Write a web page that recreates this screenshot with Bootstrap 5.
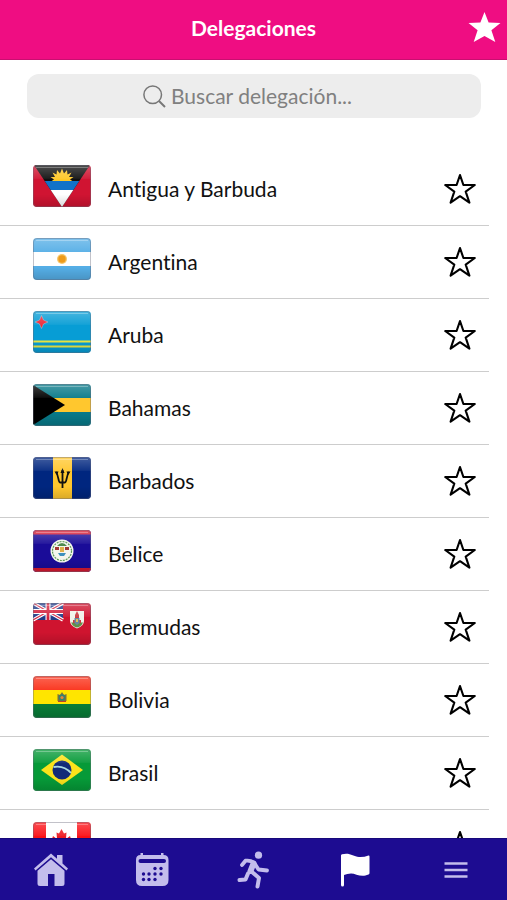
<!DOCTYPE html>
<html lang="es">
<head>
<meta charset="utf-8">
<meta name="viewport" content="width=device-width, initial-scale=1">
<title>Delegaciones</title>
<link rel="stylesheet" href="https://cdn.jsdelivr.net/npm/bootstrap@5.3.0/dist/css/bootstrap.min.css">
<style>
  body { font-family: Lato, "Noto Sans", sans-serif; font-variant-ligatures: none; color: #111; background: #fff; }
  .top-bar { height: 60px; background: #ef0d82; border-bottom: 1px solid #c80f70; padding: 0 6px 4px; }
  .side-slot { width: 33px; }
  .page-title { font-size: 21px; line-height: 28px; font-weight: 700; }
  .plain-btn { background: none; border: 0; padding: 0; line-height: 0; color: inherit; }
  .search-box { height: 44px; margin: 14px 26px 35px 27px; background: #ededed; border-radius: 12px; color: #777; gap: 5px; }
  .search-box input { width: 194px; padding: 0; border: 0; background: none; outline: 0; font-size: 21px; line-height: 28px; color: #444; }
  .search-box input::placeholder { color: #808080; opacity: 1; }
  .scroll-area { min-height: 0; overflow-y: auto; scrollbar-width: none; }
  .scroll-area::-webkit-scrollbar { display: none; }
  .delegations { margin-right: 18px; }
  .delegation { height: 73px; padding: 0 13px 0 33px; border-bottom: 1px solid #cdcdcd; }
  .flag { width: 58px; height: 42px; border-radius: 4px; margin-bottom: 6px; flex: none; }
  .delegation a { color: #111; font-size: 21px; line-height: 28px; gap: 17px; }
  .bottom-bar { height: 62px; background: #1d0c91; border-top: 1px solid #17087a; }
  .bottom-bar a { color: #c3bdec; }
  .bottom-bar a.current { color: #fff; }
</style>
<script src="https://cdn.jsdelivr.net/npm/bootstrap@5.3.0/dist/js/bootstrap.bundle.min.js"></script>
</head>
<body>
<svg width="0" height="0" class="position-absolute" aria-hidden="true">
  <defs>
    <linearGradient id="shine" x1="0" y1="0" x2="0" y2="1">
      <stop offset="0" stop-color="#fff" stop-opacity=".26"/><stop offset=".32" stop-color="#fff" stop-opacity=".06"/>
      <stop offset=".33" stop-color="#fff" stop-opacity="0"/><stop offset=".7" stop-color="#000" stop-opacity="0"/>
      <stop offset="1" stop-color="#000" stop-opacity=".15"/>
    </linearGradient>
    <symbol id="gloss" viewBox="0 0 58 42">
      <rect width="58" height="42" fill="url(#shine)"/>
      <rect x=".5" y=".5" width="57" height="41" rx="3.5" fill="none" stroke="#667" stroke-opacity=".4"/>
      <path d="M3 2.5H55" stroke="#fff" stroke-opacity=".3"/>
    </symbol>
    <symbol id="star-line" viewBox="0 0 32 32">
      <path d="M16 2 19.400 12H30.800L21.700 18.600 25.400 29.600 16 23.200 6.600 29.600 10.300 18.600 1.200 12H12.600Z" fill="none" stroke="#000" stroke-width="2.100" stroke-linejoin="round"/>
    </symbol>
  </defs>
</svg>

<div class="d-flex flex-column vh-100">
  <header class="top-bar d-flex align-items-center justify-content-between text-white flex-shrink-0">
    <span class="side-slot"></span>
    <h1 class="page-title m-0">Delegaciones</h1>
    <button class="plain-btn" type="button" aria-label="Favoritos">
      <svg width="33" height="33" viewBox="0 0 33 33"><path d="M16.5 1 20.6 11.5 32.5 12 23.4 19.3 27.3 31 16.5 25 5.7 31 9.6 19.3.5 12 12.4 11.5Z" fill="currentColor"/></svg>
    </button>
  </header>

  <form class="search-box d-flex align-items-center justify-content-center flex-shrink-0" role="search">
    <label for="q" class="d-flex"><svg width="23" height="23" viewBox="0 0 23 23" fill="none" stroke="#777" stroke-width="1.5" role="img" aria-label="Buscar"><circle cx="9.7" cy="9.7" r="8.8"/><path d="M16 16 22 22" stroke-width="2"/></svg></label>
    <input id="q" type="text" placeholder="Buscar delegación...">
  </form>

  <main class="scroll-area flex-fill">
    <ul class="delegations list-unstyled mb-0">
      <li class="delegation d-flex align-items-center justify-content-between">
        <a href="#antigua" class="d-flex align-items-center text-decoration-none"><svg class="flag" viewBox="0 0 58 42"><path fill="#d01432" d="M0 0H58V42H0Z"/><path fill="#111" d="M1 0H57L29 42Z"/><path fill="#ffc726" d="M17 17 21 14.5 17.5 12 22 12 19.500 7.500 23.500 9.500 24 5 27 8.500 29 3.500 31 8.500 34 5 34.500 9.500 38.500 7.500 36 12 40.500 12 37 14.500 41 17Z"/><path fill="#1272c8" d="M11.700 16H46.300L40.300 25H17.700Z"/><path fill="#fff" d="M17.700 25H40.300L29 42Z"/><use href="#gloss"/></svg>Antigua y Barbuda</a>
        <button class="plain-btn" type="button" aria-label="Marcar Antigua y Barbuda"><svg width="32" height="32"><use href="#star-line"/></svg></button>
      </li>
      <li class="delegation d-flex align-items-center justify-content-between">
        <a href="#argentina" class="d-flex align-items-center text-decoration-none"><svg class="flag" viewBox="0 0 58 42"><path fill="#55aee6" d="M0 0H58V42H0Z"/><path fill="#fff" d="M0 14H58V28H0Z"/><circle cx="29" cy="21" r="5" fill="#f6c66b"/><circle cx="29" cy="21" r="3.700" fill="#ee9b1b"/><use href="#gloss"/></svg>Argentina</a>
        <button class="plain-btn" type="button" aria-label="Marcar Argentina"><svg width="32" height="32"><use href="#star-line"/></svg></button>
      </li>
      <li class="delegation d-flex align-items-center justify-content-between">
        <a href="#aruba" class="d-flex align-items-center text-decoration-none"><svg class="flag" viewBox="0 0 58 42"><path fill="#079dd5" d="M0 0H58V42H0Z"/><path stroke="#e8e545" stroke-width="2" d="M0 30.500H58M0 35.500H58"/><path fill="#ed2736" stroke="#c5dce8" stroke-width=".4" d="M8.500 4.500 10.500 9 15 11 10.500 13 8.500 17.500 6.500 13 2 11 6.500 9Z"/><use href="#gloss"/></svg>Aruba</a>
        <button class="plain-btn" type="button" aria-label="Marcar Aruba"><svg width="32" height="32"><use href="#star-line"/></svg></button>
      </li>
      <li class="delegation d-flex align-items-center justify-content-between">
        <a href="#bahamas" class="d-flex align-items-center text-decoration-none"><svg class="flag" viewBox="0 0 58 42"><path fill="#087988" d="M0 0H58V42H0Z"/><path fill="#ffc72e" d="M0 14H58V28H0Z"/><path fill="#000" d="M0 1 32 21 0 41Z"/><use href="#gloss"/></svg>Bahamas</a>
        <button class="plain-btn" type="button" aria-label="Marcar Bahamas"><svg width="32" height="32"><use href="#star-line"/></svg></button>
      </li>
      <li class="delegation d-flex align-items-center justify-content-between">
        <a href="#barbados" class="d-flex align-items-center text-decoration-none"><svg class="flag" viewBox="0 0 58 42"><path fill="#00267f" d="M0 0H58V42H0Z"/><path fill="#ffc72e" d="M20 0H39V42H20Z"/><path fill="none" stroke="#111" stroke-width="1.800" d="M29.500 31V13M23 15C26 19 25 25 27 25.500H32C34 25 33 19 36 15"/><path fill="#111" d="M29.500 11 31.500 16H27.500ZM21.500 14.500 25.500 14.500 24 18ZM37.500 14.500 33.500 14.500 35 18Z"/><use href="#gloss"/></svg>Barbados</a>
        <button class="plain-btn" type="button" aria-label="Marcar Barbados"><svg width="32" height="32"><use href="#star-line"/></svg></button>
      </li>
      <li class="delegation d-flex align-items-center justify-content-between">
        <a href="#belice" class="d-flex align-items-center text-decoration-none"><svg class="flag" viewBox="0 0 58 42"><path fill="#1a0c98" d="M0 0H58V42H0Z"/><path fill="#d71931" d="M0 0H58V4.500H0ZM0 38H58V42H0Z"/><circle cx="29" cy="21" r="11.500" fill="#f4f6ee"/><circle cx="29" cy="21" r="9.500" fill="none" stroke="#5d9a58" stroke-width="1.200" stroke-dasharray="2 1"/><path fill="#4d8b4d" d="M24 16Q29 10 34 16Z"/><path fill="#a33a35" d="M22 17H26V20H22ZM32 17H36V20H32Z"/><path fill="#e0b34d" d="M27 17H31V22H27Z"/><path fill="#3d91bd" d="M25 23H33L31 26H27Z"/><use href="#gloss"/></svg>Belice</a>
        <button class="plain-btn" type="button" aria-label="Marcar Belice"><svg width="32" height="32"><use href="#star-line"/></svg></button>
      </li>
      <li class="delegation d-flex align-items-center justify-content-between">
        <a href="#bermudas" class="d-flex align-items-center text-decoration-none"><svg class="flag" viewBox="0 0 58 42"><path fill="#cf142f" d="M0 0H58V42H0Z"/><path fill="#203a87" d="M0 0H30V17H0Z"/><path stroke="#fff" stroke-width="3.400" d="M0 0 30 17M30 0 0 17"/><path stroke="#d32b48" stroke-width="1.200" d="M0 0 30 17M30 0 0 17"/><path stroke="#fff" stroke-width="5" d="M15 0V17M0 8.500H30"/><path stroke="#d3203b" stroke-width="2.800" d="M15 0V17M0 8.500H30"/><path fill="#f1f3ea" d="M37 8H51V18Q51 23 44 25.500Q37 23 37 18Z"/><path fill="#62904a" d="M38 19.500H50Q48 24 44 24.500Q40 24 38 19.500Z"/><path fill="#c83b42" d="M42 12 44 8 46 12V17H48V20H40V17H42Z"/><path fill="#6688a2" d="M41.500 15H46.500V20L44 22 41.500 20Z"/><path fill="#e7c057" d="M43 16H45V19H43Z"/><use href="#gloss"/></svg>Bermudas</a>
        <button class="plain-btn" type="button" aria-label="Marcar Bermudas"><svg width="32" height="32"><use href="#star-line"/></svg></button>
      </li>
      <li class="delegation d-flex align-items-center justify-content-between">
        <a href="#bolivia" class="d-flex align-items-center text-decoration-none"><svg class="flag" viewBox="0 0 58 42"><path fill="#fa3018" d="M0 0H58V14H0Z"/><path fill="#ffe500" d="M0 14H58V28H0Z"/><path fill="#087c37" d="M0 28H58V42H0Z"/><path fill="#79733c" d="M24.500 18 27 19 29 16 31 19 33.500 18V25H24.500Z"/><circle cx="29" cy="21.500" r="3.200" fill="#378070"/><circle cx="29" cy="21.500" r="1.600" fill="#e58634"/><path stroke="#b8432c" d="M25 25.500H33"/><use href="#gloss"/></svg>Bolivia</a>
        <button class="plain-btn" type="button" aria-label="Marcar Bolivia"><svg width="32" height="32"><use href="#star-line"/></svg></button>
      </li>
      <li class="delegation d-flex align-items-center justify-content-between">
        <a href="#brasil" class="d-flex align-items-center text-decoration-none"><svg class="flag" viewBox="0 0 58 42"><path fill="#069a38" d="M0 0H58V42H0Z"/><path fill="#fbe21b" d="M8 21 29 5.500 50 21 29 36Z"/><circle cx="29" cy="21" r="9.500" fill="#122b78"/><path fill="none" stroke="#a9d9e0" stroke-width="1.800" d="M20.500 18Q31 16 38 24"/><use href="#gloss"/></svg>Brasil</a>
        <button class="plain-btn" type="button" aria-label="Marcar Brasil"><svg width="32" height="32"><use href="#star-line"/></svg></button>
      </li>
      <li class="delegation d-flex align-items-center justify-content-between">
        <a href="#canada" class="d-flex align-items-center text-decoration-none" aria-label="Canadá"><svg class="flag" viewBox="0 0 58 42"><path fill="#fb1017" d="M0 0H58V42H0Z"/><path fill="#fff" d="M13 0H44V42H13Z"/><path fill="#ed1c24" d="M28.500 7 31 11.500 33.500 10.500 33 17 37 14 38 17 41 17 39 22 40 23 33 28 29 28V34H28V28H24L17 23 18 22 16 17 19 17 20 14 24 17 23.500 10.500 26 11.500Z"/><use href="#gloss"/></svg></a>
        <button class="plain-btn" type="button" aria-label="Marcar Canadá"><svg width="32" height="32"><use href="#star-line"/></svg></button>
      </li>
    </ul>
  </main>

  <nav class="bottom-bar row g-0 align-items-center text-center flex-shrink-0" aria-label="Principal">
    <a class="col" href="#inicio" aria-label="Inicio"><svg width="36" height="36" viewBox="0 0 36 36" fill="currentColor"><path d="M18 1.500 24 6.700V3H29.500V11.500L35 16.600 33.500 18.600 18 5.200 2.500 18.600 1 16.600Z"/><path d="M18 7.200 31.500 18.800V31.500Q31.500 34 29 34H21.500V22H15V34H7Q4.500 34 4.500 31.500V18.800Z"/></svg></a>
    <a class="col" href="#calendario" aria-label="Calendario"><svg width="36" height="36" viewBox="0 0 36 36"><path fill="currentColor" d="M9 1V3H27V1H29.500V3Q34.500 3 34.500 8V28Q34.500 34 28.500 34H8Q2 34 2 28V8Q2 3 6.500 3V1Z"/><path stroke="#1d0c91" stroke-width="4" stroke-linecap="round" d="M6.500 9H30"/><g fill="#1d0c91"><circle cx="21" cy="16.500" r="1.700"/><circle cx="27" cy="16.500" r="1.700"/><circle cx="9.500" cy="22" r="1.700"/><circle cx="15" cy="22" r="1.700"/><circle cx="21" cy="22" r="1.700"/><circle cx="27" cy="22" r="1.700"/><circle cx="9.500" cy="27.500" r="1.700"/><circle cx="15" cy="27.500" r="1.700"/><circle cx="21" cy="27.500" r="1.700"/></g></svg></a>
    <a class="col" href="#deportes" aria-label="Deportes"><svg width="36" height="38" viewBox="0 0 36 38" fill="none" stroke="currentColor" stroke-linecap="round" stroke-linejoin="round"><circle cx="22.500" cy="4.200" r="3.600" fill="currentColor" stroke="none"/><path stroke-width="3.800" d="M6 14 9.500 9.700Q14 9 18 11.500L22.500 18.500 31 19.500"/><path stroke-width="6" d="M17.500 12.500 14.500 20"/><path stroke-width="4" d="M16 21 23 27 21.500 35.500M12 22.500 9.500 28.500 3.500 29"/></svg></a>
    <a class="col current" href="#delegaciones" aria-label="Delegaciones" aria-current="page"><svg width="36" height="36" viewBox="0 0 36 36" fill="currentColor"><path d="M4 3.500Q4 2.500 5 2.300C13 .3 16 4.500 22 5Q27 5.300 31.500 3.500 32.500 3.300 32.500 4.500V21Q32.500 22 31.500 22.500C24 26 19 21.500 14 21.500Q10 21.500 7 23V33Q7 34.500 5.500 34.500T4 33Z"/></svg></a>
    <a class="col" href="#menu" aria-label="Menú"><svg width="24" height="36" viewBox="0 0 24 36" fill="none" stroke="currentColor" stroke-width="2.500"><path d="M.5 11.500H23.500M.5 18H23.500M.5 24.500H23.500"/></svg></a>
  </nav>
</div>
</body>
</html>
